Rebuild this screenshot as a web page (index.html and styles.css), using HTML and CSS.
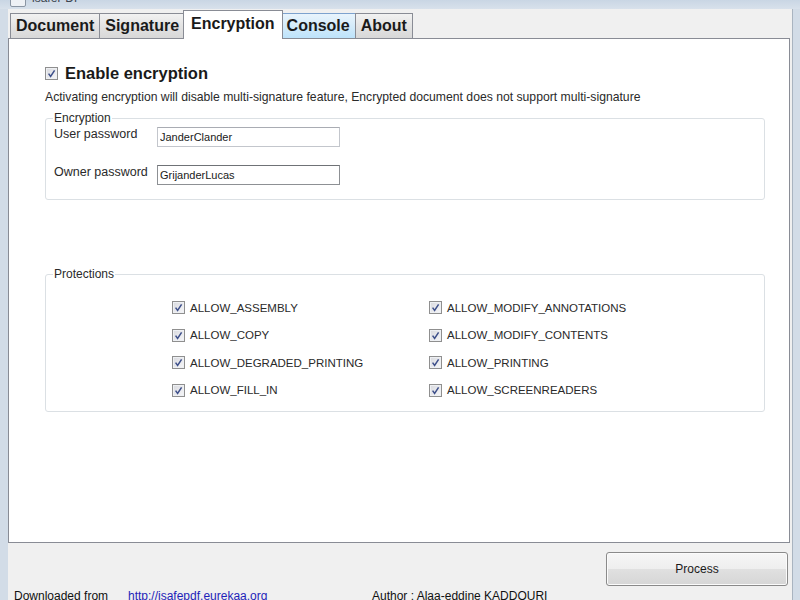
FILE: index.html
```html
<!DOCTYPE html>
<html lang="en">
<head>
    <meta charset="UTF-8">
    <title>isafePDF</title>
    <link rel="stylesheet" href="styles.css">
</head>
<body>
    <div class="window">
        <div class="titlebar">
            <span class="app-icon"></span>
            <span class="title">isafePDF</span>
        </div>
        <div class="client">
            <div class="tabs">
                <div class="tab">Document</div>
                <div class="tab">Signature</div>
                <div class="tab active">Encryption</div>
                <div class="tab hover">Console</div>
                <div class="tab">About</div>
            </div>

            <div class="panel">
                <div class="enable-row">
                    <span class="cb"><svg viewBox="0 0 11 11"><path d="M2.6 5.6 L4.6 8.4 L8.6 2.4"/></svg></span>
                    <span class="enable-label">Enable encryption</span>
                </div>
                <div class="desc">Activating encryption will disable multi-signature feature, Encrypted document does not support multi-signature</div>

                <fieldset class="group enc">
                    <legend>Encryption</legend>
                    <div class="field-row">
                        <label for="userpw">User password</label>
                        <input type="text" id="userpw" value="JanderClander">
                    </div>
                    <div class="field-row">
                        <label for="ownerpw">Owner password</label>
                        <input type="text" id="ownerpw" class="focused" value="GrijanderLucas">
                    </div>
                </fieldset>

                <fieldset class="group prot">
                    <legend>Protections</legend>
                    <div class="prot-grid">
                        <div class="opt"><span class="cb"><svg viewBox="0 0 11 11"><path d="M2.6 5.6 L4.6 8.4 L8.6 2.4"/></svg></span>ALLOW_ASSEMBLY</div>
                        <div class="opt"><span class="cb"><svg viewBox="0 0 11 11"><path d="M2.6 5.6 L4.6 8.4 L8.6 2.4"/></svg></span>ALLOW_MODIFY_ANNOTATIONS</div>
                        <div class="opt"><span class="cb"><svg viewBox="0 0 11 11"><path d="M2.6 5.6 L4.6 8.4 L8.6 2.4"/></svg></span>ALLOW_COPY</div>
                        <div class="opt"><span class="cb"><svg viewBox="0 0 11 11"><path d="M2.6 5.6 L4.6 8.4 L8.6 2.4"/></svg></span>ALLOW_MODIFY_CONTENTS</div>
                        <div class="opt"><span class="cb"><svg viewBox="0 0 11 11"><path d="M2.6 5.6 L4.6 8.4 L8.6 2.4"/></svg></span>ALLOW_DEGRADED_PRINTING</div>
                        <div class="opt"><span class="cb"><svg viewBox="0 0 11 11"><path d="M2.6 5.6 L4.6 8.4 L8.6 2.4"/></svg></span>ALLOW_PRINTING</div>
                        <div class="opt"><span class="cb"><svg viewBox="0 0 11 11"><path d="M2.6 5.6 L4.6 8.4 L8.6 2.4"/></svg></span>ALLOW_FILL_IN</div>
                        <div class="opt"><span class="cb"><svg viewBox="0 0 11 11"><path d="M2.6 5.6 L4.6 8.4 L8.6 2.4"/></svg></span>ALLOW_SCREENREADERS</div>
                    </div>
                </fieldset>
            </div>

            <div class="actions">
                <button class="process">Process</button>
            </div>

            <div class="footer">
                <span class="dl">Downloaded from</span>
                <span class="link">http://isafepdf.eurekaa.org</span>
                <span class="author">Author : Alaa-eddine KADDOURI</span>
            </div>
        </div>
    </div>
</body>
</html>
```

FILE: styles.css
```css
html, body {
    margin: 0;
    padding: 0;
}
body {
    width: 800px;
    height: 600px;
    overflow: hidden;
    background: #d2dce7;
    font-family: "Liberation Sans", Arial, sans-serif;
    color: #1e1e1e;
}
.window {
    height: 600px;
    display: flex;
    flex-direction: column;
}
.titlebar {
    flex: none;
    height: 9px;
    overflow: hidden;
    display: flex;
    align-items: flex-start;
    padding-left: 10px;
    background: linear-gradient(#c9d6e4, #d8e1eb);
}
.app-icon {
    width: 14px;
    height: 12px;
    margin-top: -7px;
    border: 1px solid #8a95a3;
    border-radius: 2px;
    background: #eef1f5;
}
.title {
    font-size: 12px;
    line-height: 12px;
    margin-top: -8px;
    margin-left: 6px;
    color: #3c4550;
}
.client {
    flex: 1;
    min-height: 0;
    overflow: hidden;
    margin: 0 8px;
    background: #f0f0f0;
    box-shadow: 1px 0 0 #a9b4c0;
    display: flex;
    flex-direction: column;
}
.client > div {
    flex: none;
}

/* tabs */
.tabs {
    height: 29px;
    display: flex;
    align-items: flex-end;
    padding-left: 2px;
}
.tab {
    box-sizing: border-box;
    height: 25px;
    padding: 0 5px;
    margin-left: -1px;
    border: 1px solid #898c95;
    border-bottom: none;
    background: linear-gradient(#f2f2f2, #e3e3e3 50%, #d8d8d8);
    font-size: 16px;
    font-weight: bold;
    line-height: 24px;
    color: #1a1a1a;
}
.tab:first-child {
    margin-left: 0;
}
.tab.hover {
    background: linear-gradient(#e9f4fc, #d4ebfa 50%, #bde3fb);
    border-color: #7da2ce;
}
.tab.active {
    position: relative;
    z-index: 1;
    height: 29px;
    padding: 0 7px;
    margin: 0 -1px -1px -2px;
    background: #fff;
    line-height: 25px;
}

/* panel */
.panel {
    box-sizing: border-box;
    height: 505px;
    margin-right: 2px;
    background: #fff;
    border: 1px solid #898c95;
    padding: 24px 0 0 36px;
}
.enable-row {
    height: 20px;
    display: flex;
    align-items: center;
}
.enable-label {
    font-size: 16.5px;
    font-weight: bold;
    margin-left: 7px;
    color: #1a1a1a;
}
.cb {
    box-sizing: border-box;
    width: 13px;
    height: 13px;
    flex: none;
    border: 1px solid #8f8f8f;
    background: linear-gradient(135deg, #d8d9de, #f7f7f9);
    box-shadow: inset 0 0 0 1px #eef0f3;
    display: flex;
}
.cb svg {
    width: 11px;
    height: 11px;
}
.cb path {
    fill: none;
    stroke: #3d4f8a;
    stroke-width: 1.5;
}
.desc {
    margin-top: 7px;
    font-size: 12.2px;
    line-height: 15px;
    color: #2a2a2a;
}

/* group boxes */
.group {
    box-sizing: border-box;
    width: 720px;
    margin: 6px 0 0 0;
    padding: 2px 8px 14px 8px;
    border: 1px solid #dbe0e4;
    border-radius: 3px;
}
.group legend {
    padding: 0 1px;
    margin-left: -1px;
    font-size: 12px;
    line-height: 14px;
    color: #2a2a2a;
}
.field-row {
    display: flex;
    align-items: flex-start;
}
.field-row + .field-row {
    margin-top: 18px;
}
.field-row label {
    width: 103px;
    font-size: 12.5px;
    line-height: 14px;
    color: #2a2a2a;
}
.field-row input {
    box-sizing: border-box;
    width: 183px;
    height: 20px;
    margin: 0;
    padding: 0 2px;
    border: 1px solid #c3c6cc;
    border-top-color: #a9acb3;
    font-family: "Liberation Sans", Arial, sans-serif;
    font-size: 11px;
    color: #1a1a1a;
}
.field-row input.focused {
    border-color: #8d9094;
    border-top-color: #6f7276;
}
.prot {
    margin-top: 67px;
    padding: 13px 8px 7px 8px;
}
.prot-grid {
    display: grid;
    grid-template-columns: 257px 257px;
    grid-auto-rows: 27.5px;
    padding-left: 118px;
}
.opt {
    display: flex;
    align-items: center;
    font-size: 11.5px;
    color: #2a2a2a;
}
.opt .cb {
    margin-right: 5px;
}

/* bottom */
.actions {
    display: flex;
    justify-content: flex-end;
    padding: 9px 4px 0 0;
}
.process {
    box-sizing: border-box;
    width: 182px;
    height: 34px;
    border: 1px solid #8a8a8a;
    border-radius: 3px;
    background: linear-gradient(#f6f6f6, #eeeeee 50%, #e0e0e0 51%, #d6d6d6);
    box-shadow: inset 0 0 0 1px #fbfbfb;
    font-family: "Liberation Sans", Arial, sans-serif;
    font-size: 12px;
    color: #1a1a1a;
}
.footer {
    height: 14px;
    margin-top: 3px;
    font-size: 12px;
    line-height: 14px;
    color: #111;
    display: flex;
}
.dl {
    margin-left: 6px;
    width: 114px;
}
.link {
    color: #1f1fb8;
    width: 244px;
}
```
